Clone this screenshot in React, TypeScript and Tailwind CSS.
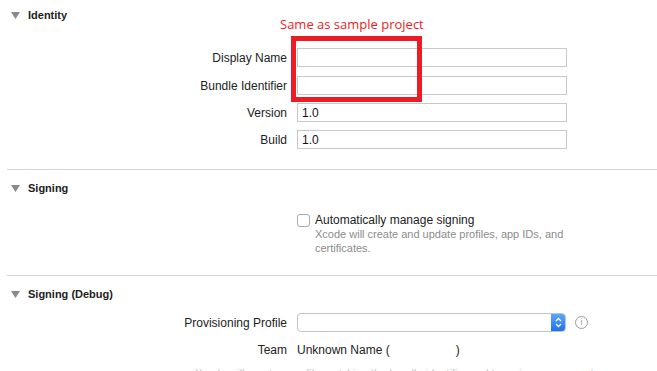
import React from "react";

const font = { fontFamily: '"Liberation Sans", Arial, sans-serif' };

function Triangle() {
  return (
    <svg width="9" height="7" viewBox="0 0 9 7" className="shrink-0">
      <path d="M0 0 H9 L4.5 7 Z" fill="#8a8a8a" />
    </svg>
  );
}

function Header({ title }: { title: string }) {
  return (
    <div className="flex h-full items-center gap-[8px] pl-[11px]">
      <Triangle />
      <span className="text-[11px] font-bold text-[#222]">{title}</span>
    </div>
  );
}

function Divider() {
  return <div className="ml-[7px] h-px bg-[#d6d6d6]" />;
}

function FieldRow({ label, value, className = "" }: { label: string; value?: string; className?: string }) {
  return (
    <div className={`flex h-[19px] items-center ${className}`}>
      <div className="w-[288px] pr-[1px] text-right text-[12px] text-[#222]">{label}</div>
      <div className="ml-[9px] flex h-[19px] w-[270px] items-center border border-[#c9c9c9] bg-white pl-[4px] text-[12px] text-[#111]">
        {value}
      </div>
    </div>
  );
}

export default function App() {
  return (
    <div className="relative h-[371px] w-[657px] overflow-hidden bg-white" style={font}>
      {/* Identity */}
      <div className="h-[30px]">
        <Header title="Identity" />
      </div>
      <FieldRow label="Display Name" className="mt-[18px]" />
      <FieldRow label="Bundle Identifier" className="mt-[9px]" />
      <FieldRow label="Version" value="1.0" className="mt-[8px]" />
      <FieldRow label="Build" value="1.0" className="mt-[8px]" />
      <div className="mt-[20px]">
        <Divider />
      </div>

      {/* Signing */}
      <div className="h-[36px]">
        <Header title="Signing" />
      </div>
      <div className="mt-[7px] flex">
        <div className="w-[297px]" />
        <div className="flex flex-col">
          <div className="flex h-[14px] items-center">
            <div className="h-[13px] w-[13px] rounded-[3px] border border-[#a9a9a9] bg-white" />
            <span className="ml-[5px] text-[12px] text-[#222]">Automatically manage signing</span>
          </div>
          <div className="ml-[18px] w-[250px] text-[11px] leading-[14px] text-[#8c8c8c]">
            Xcode will create and update profiles, app IDs, and certificates.
          </div>
        </div>
      </div>
      <div className="mt-[20px]">
        <Divider />
      </div>

      {/* Signing (Debug) */}
      <div className="h-[36px]">
        <Header title="Signing (Debug)" />
      </div>
      <div className="mt-[1px] flex h-[19px] items-center">
        <div className="w-[288px] pr-[1px] text-right text-[12px] text-[#222]">Provisioning Profile</div>
        <div className="ml-[9px] flex h-[19px] w-[269px] items-stretch overflow-hidden rounded-[4px] border border-[#c4c4c4] bg-white">
          <div className="flex-1" />
          <div className="flex w-[14px] items-center justify-center bg-gradient-to-b from-[#5aa5ff] to-[#1e6ff5]">
            <svg width="7" height="11" viewBox="0 0 7 11">
              <path d="M1 4 L3.5 1.5 L6 4 M1 7 L3.5 9.5 L6 7" fill="none" stroke="#fff" strokeWidth="1.3" />
            </svg>
          </div>
        </div>
        <div className="ml-[9px] flex h-[13px] w-[13px] items-center justify-center rounded-full border border-[#9a9a9a] text-[9px] leading-none text-[#9a9a9a]">
          i
        </div>
      </div>
      <div className="mt-[8px] flex h-[19px] items-center">
        <div className="w-[288px] pr-[1px] text-right text-[12px] text-[#222]">Team</div>
        <div className="ml-[9px] text-[12px] text-[#222]">
          Unknown Name (<span className="inline-block w-[66px]" />)
        </div>
      </div>
      <div className="mt-[7px] flex">
        <div className="w-[195px]" />
        <div className="text-[11px] leading-[14px] text-[#c8c8c8]">
          Xcode will create a profile matching the bundle identifier and team in your account.
        </div>
      </div>

      {/* annotation overlay */}
      <div className="absolute left-[280px] top-[15px] text-[13px] text-[#ed1c24]" style={{ fontFamily: '"Open Sans", sans-serif' }}>
        Same as sample project
      </div>
      <div className="absolute left-[291px] top-[36px] h-[66px] w-[131px] border-[5px] border-[#ed1c24]" />
    </div>
  );
}
